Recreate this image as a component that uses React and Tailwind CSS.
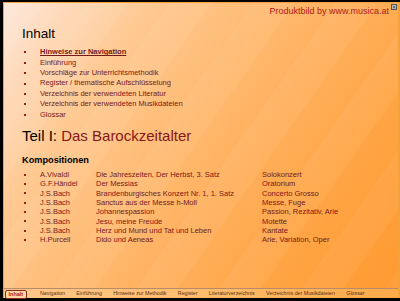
import React from 'react';

const contents = [
  'Hinweise zur Navigation',
  'Einführung',
  'Vorschläge zur Unterrichtsmethodik',
  'Register / thematische Aufschlüsselung',
  'Verzeichnis der verwendeten Literatur',
  'Verzeichnis der verwendeten Musikdateien',
  'Glossar',
];

const works = [
  ['A.Vivaldi', 'Die Jahreszeiten, Der Herbst, 3. Satz', 'Solokonzert'],
  ['G.F.Händel', 'Der Messias', 'Oratorium'],
  ['J.S.Bach', 'Brandenburgisches Konzert Nr. 1, 1. Satz', 'Concerto Grosso'],
  ['J.S.Bach', 'Sanctus aus der Messe h-Moll', 'Messe, Fuge'],
  ['J.S.Bach', 'Johannespassion', 'Passion, Rezitativ, Arie'],
  ['J.S.Bach', 'Jesu, meine Freude', 'Motette'],
  ['J.S.Bach', 'Herz und Mund und Tat und Leben', 'Kantate'],
  ['H.Purcell', 'Dido und Aeneas', 'Arie, Variation, Oper'],
];

const navItems = [
  'Navigation',
  'Einführung',
  'Hinweise zur Methodik',
  'Register',
  'Literaturverzeichnis',
  'Verzeichnis der Musikdateien',
  'Glossar',
];

const Bullet = () => (
  <span className="flex items-center">
    <span className="ml-[2px] block h-[2px] w-[2px] bg-[#a01c1c]" />
  </span>
);

const App = () => {
  return (
    <div className="h-[301px] w-[400px] bg-black pl-[3px] pt-[2px] pb-[3px] font-['Liberation_Sans',Arial,sans-serif]">
      <div className="relative flex h-full flex-col border-l border-t border-r-2 border-[#f3a23c]">
        <div className="flex-1 bg-[repeating-linear-gradient(125deg,rgba(255,255,255,0.05)_0_34px,rgba(255,255,255,0)_34px_68px),linear-gradient(125deg,#fde7da_0%,#ffca94_24%,#ffb567_52%,#ffa444_78%,#ff9a30_100%)] pl-[18px]">
          <div className="mt-[4.4px] flex justify-end pr-[9px] text-[9px] leading-[9px] text-[#b01818]">
            Produktbild by www.musica.at
          </div>

          <h1 className="mt-[10.2px] text-[13.5px] leading-[13.5px] text-black">Inhalt</h1>

          <ul className="mt-[7.1px]">
            {contents.map((item, i) => (
              <li key={item} className="grid grid-cols-[18px_auto] text-[7.5px] leading-[10.4px] text-[#761a1a]">
                <Bullet />
                <span className={i === 0 ? 'font-bold underline' : ''}>{item}</span>
              </li>
            ))}
          </ul>

          <h2 className="mt-[8.3px] text-[15px] leading-[15px] text-black">
            Teil I: <span className="text-[#861818]">Das Barockzeitalter</span>
          </h2>

          <h3 className="mt-[12.2px] text-[9.2px] font-bold leading-[9.2px] text-black">Kompositionen</h3>

          <div className="mt-[5.3px]">
            {works.map(([composer, title, genre], i) => (
              <div key={i} className="grid grid-cols-[18px_56px_166px_auto] text-[7.5px] leading-[9.34px] text-[#761a1a]">
                <Bullet />
                <span>{composer}</span>
                <span>{title}</span>
                <span>{genre}</span>
              </div>
            ))}
          </div>
        </div>

        <div className="flex h-[10px] items-start gap-[11.3px] border-t border-[#b98a68] bg-[linear-gradient(90deg,#fdc88a_0%,#ffbc6c_50%,#fdaa48_100%)] text-[5.3px] leading-[9px] text-[#5a3014]">
          <span className="ml-[1px] mr-[2px] mt-[0.5px] rounded-[2px] border border-[#8a2a1a] bg-[#fdd6a4] px-[2.5px] text-[5.5px] font-bold leading-[7px] text-[#b01818]">
            Inhalt
          </span>
          {navItems.map((item) => (
            <span key={item}>{item}</span>
          ))}
        </div>

        <div className="absolute right-[1px] top-[1px] flex h-[6px] w-[6px] items-center justify-center border border-[#555] bg-[#bbb] text-[5px] leading-none text-[#222]">
          ×
        </div>
      </div>
    </div>
  );
};

export default App;
